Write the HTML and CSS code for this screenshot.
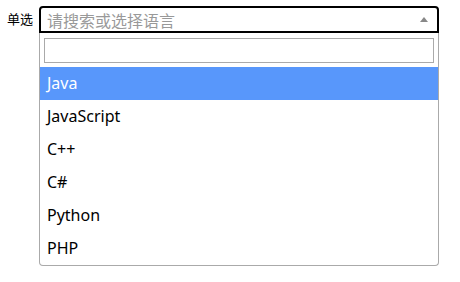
FILE: index.html
```html
<!DOCTYPE html>
<html lang="zh-CN">
<head>
  <meta charset="UTF-8" />
  <title>单选</title>
  <link rel="stylesheet" href="styles.css">
</head>
<body>
  <div class="field">
    <label class="label">单选</label>
    <div class="select">
      <div class="selection">
        <span class="placeholder">请搜索或选择语言</span>
        <span class="arrow"></span>
      </div>
      <div class="dropdown">
        <div class="search"><input type="text" class="search-input"></div>
        <ul class="options">
          <li class="option active">Java</li>
          <li class="option">JavaScript</li>
          <li class="option">C++</li>
          <li class="option">C#</li>
          <li class="option">Python</li>
          <li class="option">PHP</li>
        </ul>
      </div>
    </div>
  </div>
</body>
</html>
```

FILE: styles.css
```css
html, body {
  margin: 0;
  background: #fff;
  font-family: "Noto Sans", "Noto Sans CJK SC", sans-serif;
}

.field {
  display: flex;
  align-items: flex-start;
  padding: 6px 0 0 7px;
}

.label {
  font-size: 13px;
  line-height: 14px;
  margin-top: 6px;
  width: 32px;
  font-family: "Noto Sans CJK SC", sans-serif;
}

.select {
  width: 400px;
}

.selection {
  height: 27px;
  box-sizing: border-box;
  border: 2px solid #000;
  border-radius: 4px 4px 0 0;
  display: flex;
  align-items: center;
  padding: 0 8px 0 6px;
}

.placeholder {
  flex: 1;
  color: #999;
  font-size: 16px;
  font-family: "Noto Sans CJK SC", sans-serif;
}

.arrow {
  width: 0;
  height: 0;
  border-left: 4px solid transparent;
  border-right: 4px solid transparent;
  border-bottom: 5px solid #888;
  margin-right: 1px;
}

.dropdown {
  border: 1px solid #aaa;
  border-top: none;
  border-radius: 0 0 4px 4px;
}

.search {
  padding: 5px 4px 4px;
}

.search-input {
  display: block;
  width: 100%;
  box-sizing: border-box;
  height: 25px;
  border: 1px solid #aaa;
  margin: 0;
  outline: none;
}

.options {
  list-style: none;
  margin: 0;
  padding: 0;
}

.option {
  height: 33px;
  line-height: 33px;
  padding: 0 7px;
  font-size: 16px;
  color: #000;
}

.option.active {
  background: #5897fb;
  color: #fff;
}
```
